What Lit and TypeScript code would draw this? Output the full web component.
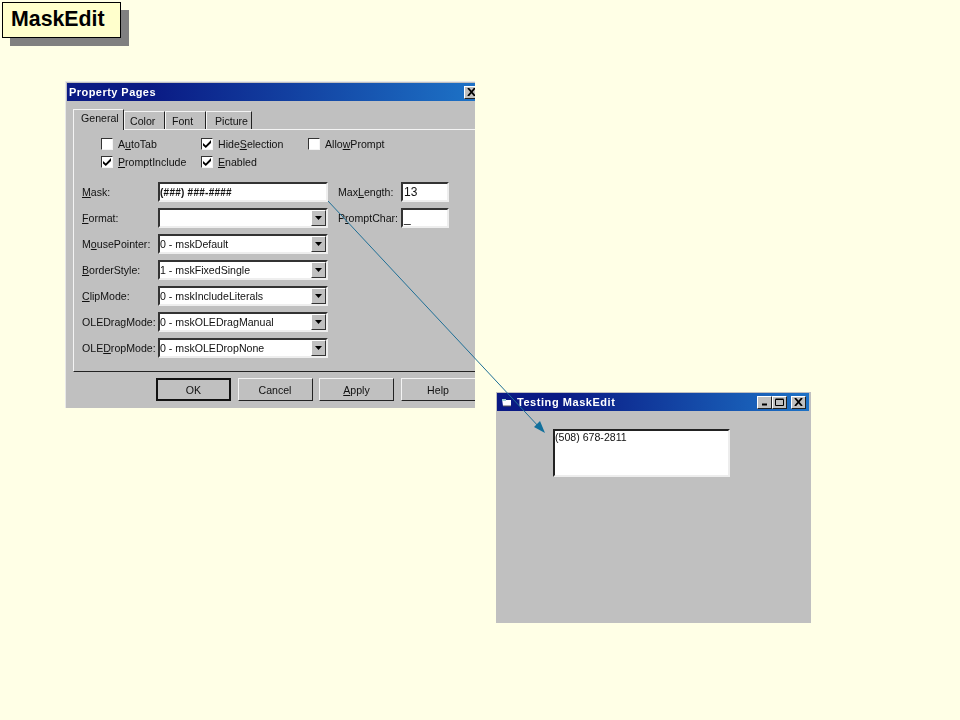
import { LitElement, html, css } from "lit";
import { customElement } from "lit/decorators.js";

const check = html`<svg viewBox="0 0 8 8" width="8" height="8"><path d="M0 3l2.8 2.5L8 0v3L2.8 8 0 5.5z" fill="#000"/></svg>`;

@customElement("app-root")
export class AppRoot extends LitElement {
  static styles = css`
    :host { display: block; width: 960px; height: 720px; position: relative; overflow: hidden; background: #ffffe6; font-family: "Liberation Sans", Arial, sans-serif; font-size: 10.6px; color: #111; }
    .slide-title { margin: 2px 0 0 2px; width: 119px; height: 36px; box-sizing: border-box; border: 1px solid #000; background: #ffffcc; box-shadow: 8px 8px 0 #808080; font-size: 21.33px; font-weight: 700; line-height: 33px; padding-left: 8px; color: #000; }
    .win { position: absolute; background: #c0c0c0; box-sizing: border-box; overflow: hidden; filter: blur(0.3px); }
    .dialog { left: 65px; top: 81px; width: 410px; height: 327px; border-left: 1px solid #e8e8e8; border-top: 1px solid #e8e8e8; padding: 1px 0 0 1px; }
    .title { height: 18px; background: linear-gradient(90deg, #0a1a84, #0a1a84 20%, #1d72c6); color: #fff; font-size: 11px; font-weight: 700; display: flex; align-items: center; padding-left: 2px; letter-spacing: .45px; box-sizing: border-box; }
    .title .sp { flex: 1; }
    .wbtn { width: 14px; height: 13px; background: #c0c0c0; box-sizing: border-box; border: 1px solid; border-color: #fff #222 #222 #fff; display: flex; align-items: center; justify-content: center; flex: none; }
    .close-main { margin-right: -3px; }
    .tabs { display: flex; align-items: flex-end; height: 28px; margin-left: 6px; box-sizing: border-box; }
    .tab { height: 18px; box-sizing: border-box; border: 1px solid; border-color: #f4f4f4 #222 transparent #f4f4f4; border-bottom: 0; display: flex; align-items: center; }
    .tab.on { height: 21px; width: 51px; padding: 0 0 4px 7px; background: #c0c0c0; position: relative; top: 1px; z-index: 1; }
    .t1 { width: 41px; padding-left: 5px; }
    .t2 { width: 41px; padding-left: 6px; }
    .t3 { width: 46px; padding-left: 8px; }
    .panel { margin-left: 6px; height: 243px; box-sizing: border-box; border-top: 1px solid #f4f4f4; border-left: 1px solid #f4f4f4; border-bottom: 1px solid #222; padding: 5px 0 0 8px; }
    .checks { display: grid; grid-template-columns: 100px 107px 120px; grid-auto-rows: 18px; margin-left: 19px; }
    .ck { display: flex; align-items: center; gap: 5px; white-space: nowrap; }
    .box { width: 12px; height: 12px; box-sizing: border-box; background: #fff; border: 1px solid; border-color: #333 #f4f4f4 #f4f4f4 #333; display: flex; align-items: center; justify-content: center; }
    .form { display: flex; margin-top: 11px; }
    .rows { display: grid; grid-template-columns: 76px 170px; grid-auto-rows: 20px; row-gap: 6px; align-items: center; }
    .side { display: grid; grid-template-columns: 63px 48px; grid-auto-rows: 20px; row-gap: 6px; align-items: center; margin-left: 10px; align-content: start; }
    .fld { height: 20px; box-sizing: border-box; background: #fff; border: 2px solid; border-color: #333 #eee #eee #333; display: flex; align-items: center; white-space: nowrap; position: relative; }
    .side .fld { font-size: 12px; padding-left: 1px; }
    .mono { font-weight: 700; font-size: 10px; letter-spacing: .25px; }
    .drop { position: absolute; right: 0; top: 0; width: 15px; height: 16px; background: #c0c0c0; box-sizing: border-box; border: 1px solid; border-color: #fff #333 #333 #fff; display: flex; align-items: center; justify-content: center; }
    .buttons { display: flex; gap: 6.5px; margin: 6px 0 0 89px; width: 340px; }
    .btn { flex: 0 0 75px; height: 23px; box-sizing: border-box; border: 1px solid; border-color: #f4f4f4 #222 #222 #f4f4f4; display: flex; align-items: center; justify-content: center; }
    .btn.def { border-width: 2px; border-color: #111; }
    .app { left: 496px; top: 392px; width: 315px; height: 231px; padding: 1px 2px 0 1px; }
    .app .title { padding: 0 3px 0 4px; }
    .app .ttxt { margin-left: 5px; letter-spacing: .55px; }
    .app .wbtn { width: 15px; }
    .app .wbtn.last { margin-left: 4px; }
    .tbox { margin: 18px 0 0 56px; width: 177px; height: 48px; box-sizing: border-box; background: #fff; border: 2px solid; border-color: #222 #ededed #ededed #222; line-height: 13px; }
    .arrow { position: absolute; left: 0; top: 0; pointer-events: none; }
  `;

  private tri() {
    return html`<svg width="7" height="4" viewBox="0 0 7 4"><path d="M0 0h7L3.5 4z" fill="#000"/></svg>`;
  }

  private combo(t: string) {
    return html`<div class="fld">${t}<span class="drop">${this.tri()}</span></div>`;
  }

  render() {
    const icon = html`<svg width="11" height="10" viewBox="0 0 11 10"><path d="M1 2h3l1 1h5v6H2z" fill="#fff"/><path d="M1 2h4v2H1z" fill="#9ccfcf"/><path d="M2 9h8" stroke="#555"/></svg>`;
    return html`
      <div class="slide-title">MaskEdit</div>

      <div class="win dialog">
        <div class="title">Property Pages<span class="sp"></span>
          <span class="wbtn close-main"><svg width="9" height="8" viewBox="0 0 9 8"><path d="M1 0l7 8M8 0L1 8" stroke="#000" stroke-width="1.8" fill="none"/></svg></span>
        </div>
        <div class="tabs">
          <div class="tab on">General</div>
          <div class="tab t1">Color</div>
          <div class="tab t2">Font</div>
          <div class="tab t3">Picture</div>
        </div>
        <div class="panel">
          <div class="checks">
            <div class="ck"><span class="box"></span><span>A<u>u</u>toTab</span></div>
            <div class="ck"><span class="box">${check}</span><span>Hide<u>S</u>election</span></div>
            <div class="ck"><span class="box"></span><span>Allo<u>w</u>Prompt</span></div>
            <div class="ck"><span class="box">${check}</span><span><u>P</u>romptInclude</span></div>
            <div class="ck"><span class="box">${check}</span><span><u>E</u>nabled</span></div>
          </div>
          <div class="form">
            <div class="rows">
              <span><u>M</u>ask:</span><div class="fld mono">(###) ###-####</div>
              <span><u>F</u>ormat:</span>${this.combo("")}
              <span>M<u>o</u>usePointer:</span>${this.combo("0 - mskDefault")}
              <span><u>B</u>orderStyle:</span>${this.combo("1 - mskFixedSingle")}
              <span><u>C</u>lipMode:</span>${this.combo("0 - mskIncludeLiterals")}
              <span>OLEDragMode:</span>${this.combo("0 - mskOLEDragManual")}
              <span>OLE<u>D</u>ropMode:</span>${this.combo("0 - mskOLEDropNone")}
            </div>
            <div class="side">
              <span>Max<u>L</u>ength:</span><div class="fld">13</div>
              <span>P<u>r</u>omptChar:</span><div class="fld">_</div>
            </div>
          </div>
        </div>
        <div class="buttons">
          <div class="btn def">OK</div>
          <div class="btn">Cancel</div>
          <div class="btn"><span><u>A</u>pply</span></div>
          <div class="btn">Help</div>
        </div>
      </div>

      <div class="win app">
        <div class="title">${icon}<span class="ttxt">Testing MaskEdit</span><span class="sp"></span>
          <span class="wbtn"><svg width="8" height="8" viewBox="0 0 8 8"><path d="M1 6.5h5" stroke="#000" stroke-width="2"/></svg></span>
          <span class="wbtn"><svg width="9" height="8" viewBox="0 0 9 8"><path d="M.5 1.5h8v6h-8zM.5 1h8" stroke="#000" fill="none"/></svg></span>
          <span class="wbtn last"><svg width="9" height="8" viewBox="0 0 9 8"><path d="M1 0l7 8M8 0L1 8" stroke="#000" stroke-width="1.8" fill="none"/></svg></span>
        </div>
        <div class="tbox">(508) 678-2811</div>
      </div>

      <svg class="arrow" width="960" height="720" viewBox="0 0 960 720">
        <path d="M328 201L540 428" stroke="#1f6f96" stroke-width="1" fill="none"/>
        <path d="M545 433L534 427L540 421z" fill="#12709c"/>
      </svg>
    `;
  }
}
